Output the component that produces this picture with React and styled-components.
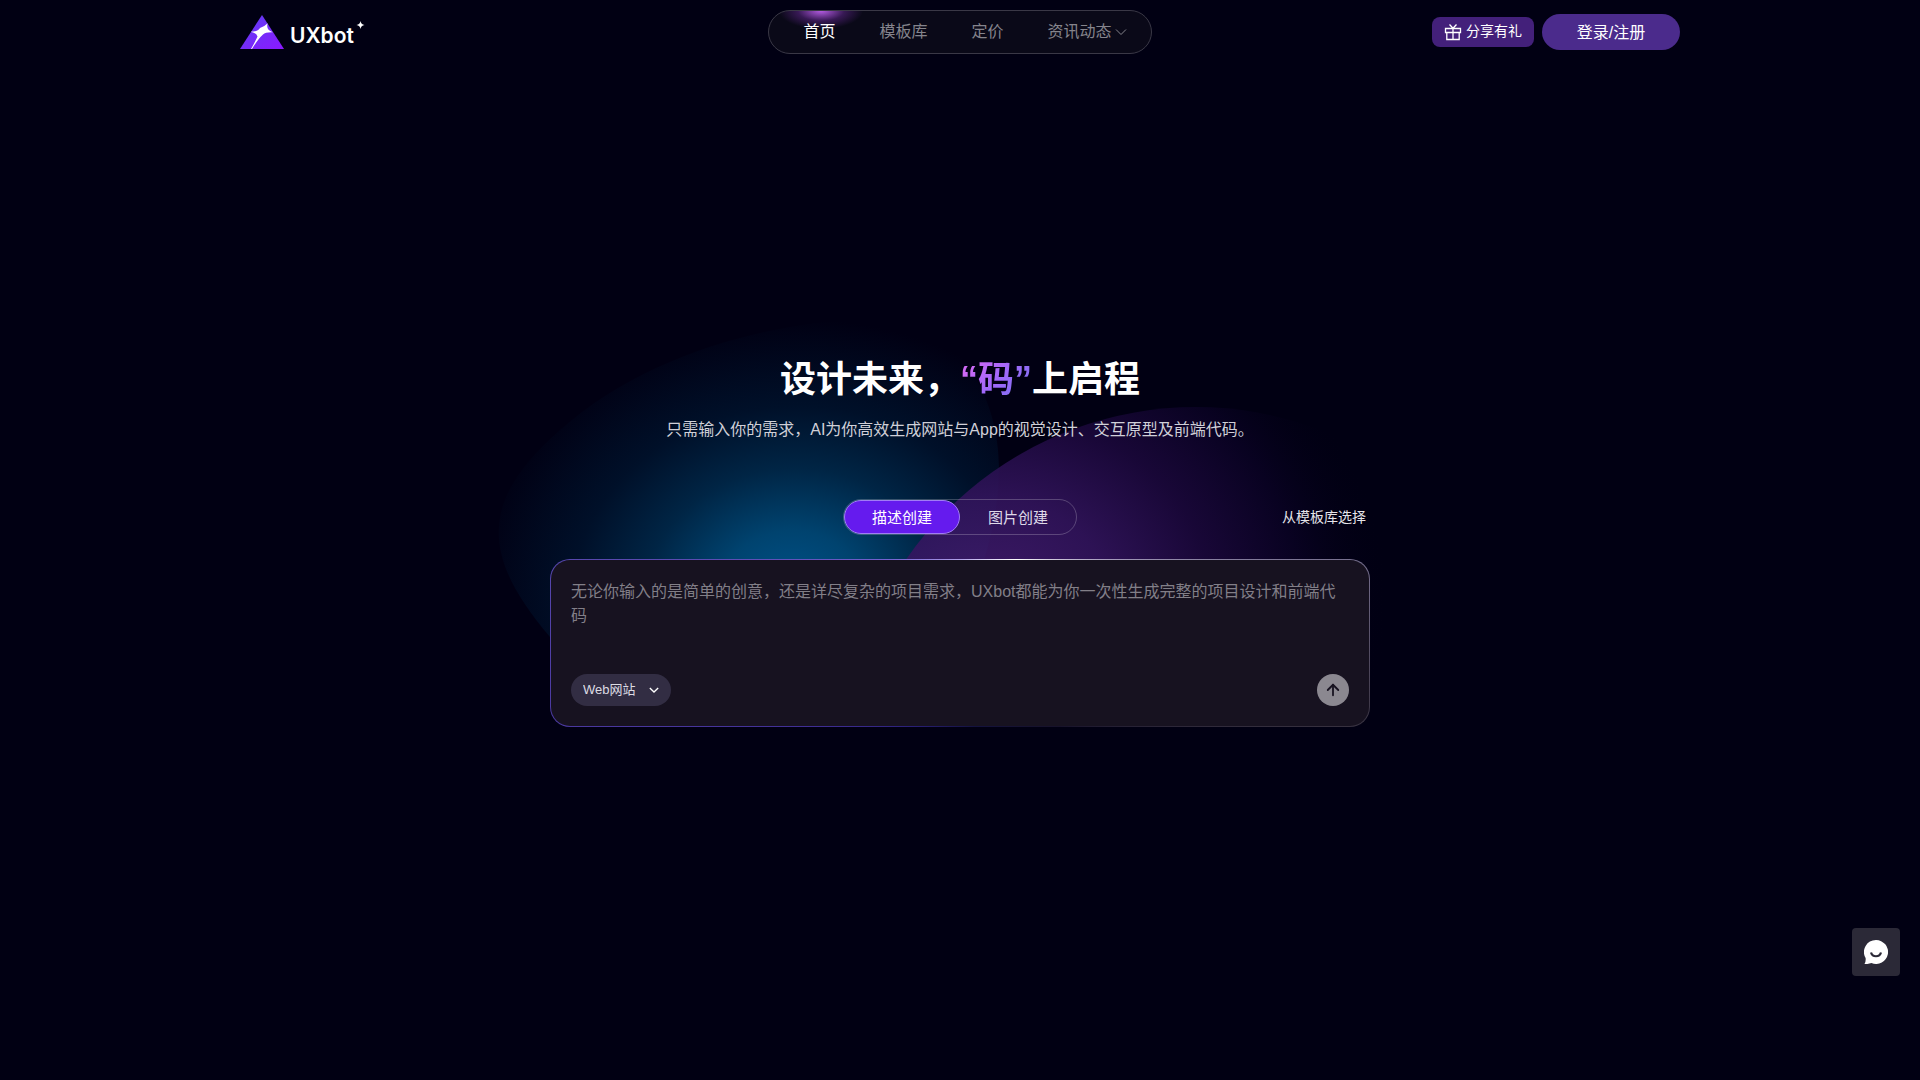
import React, { useState } from "react";
import styled, { createGlobalStyle } from "styled-components";
import { ArrowUp } from "lucide-react";

const GlobalStyle = createGlobalStyle`
  *, *::before, *::after {
    box-sizing: border-box;
  }
  body {
    margin: 0;
    background: #010013;
    color: #fff;
    font-family: "Liberation Sans", "Noto Sans CJK SC", sans-serif;
    font-size: 16px;
  }
  button, select, textarea {
    font-family: inherit;
  }
`;

const Page = styled.div`
  display: flex;
  flex-direction: column;
  min-height: 100vh;
  overflow: hidden;
`;

const Header = styled.header`
  display: grid;
  grid-template-columns: 1fr auto 1fr;
  align-items: center;
  width: 100%;
  max-width: 1440px;
  height: 64px;
  margin: 0 auto;
  position: relative;
  z-index: 1;
`;

const Logo = styled.a`
  display: flex;
  justify-self: start;
`;

const Nav = styled.nav`
  display: flex;
  align-items: center;
  gap: 44px;
  height: 44px;
  padding: 0 24px 0 34px;
  border: 1px solid #3a3846;
  border-radius: 22px;
  background: radial-gradient(ellipse 42px 18px at 52px 0, #b25be0, #64289080 55%, transparent), #0a0918;
`;

const NavLink = styled.a`
  display: flex;
  align-items: center;
  gap: 3px;
  line-height: 24px;
  color: ${(p) => (p.$active ? "#fff" : "#85848c")};
  text-decoration: none;
`;

const Actions = styled.div`
  display: flex;
  align-items: center;
  justify-content: flex-end;
  gap: 8px;
`;

const ShareButton = styled.button`
  display: flex;
  align-items: center;
  gap: 4px;
  height: 30px;
  padding: 0 12px;
  border: none;
  border-radius: 8px;
  background: #43207a;
  color: #fff;
  font-size: 14px;
  line-height: 28px;
  & > span {
    padding-bottom: 2px;
  }
`;

const LoginButton = styled.button`
  width: 138px;
  height: 36px;
  padding: 0 0 2px;
  border: none;
  border-radius: 18px;
  background: #4b2b8c;
  color: #fff;
  font-size: 16px;
`;

const Main = styled.main`
  flex: 1;
  display: flex;
  flex-direction: column;
  align-items: center;
  justify-content: center;
  padding-bottom: 64px;
`;

const Hero = styled.section`
  position: relative;
  width: 100%;
  max-width: 820px;
`;

const Glow = styled.svg`
  position: absolute;
  left: -70px;
  top: -53px;
  width: 1060px;
  height: 420px;
  pointer-events: none;
`;

const Content = styled.div`
  position: relative;
  display: flex;
  flex-direction: column;
`;

const Title = styled.h1`
  margin: 0;
  font-size: 36px;
  line-height: 54px;
  font-weight: 700;
  text-align: center;
`;

const Highlight = styled.span`
  background: linear-gradient(135deg, #cf69f5 15%, #a168fa 50%, #7c70f0 90%);
  background-clip: text;
  -webkit-background-clip: text;
  color: transparent;
`;

const Subtitle = styled.p`
  margin: 11px 0 57px;
  line-height: 24px;
  text-align: center;
  color: #d0d0d8;
`;

const ModeRow = styled.div`
  display: grid;
  grid-template-columns: 1fr auto 1fr;
  align-items: center;
  margin-bottom: 24px;
`;

const Tabs = styled.div`
  grid-column: 2;
  display: flex;
  height: 36px;
  border: 1px solid #ffffff38;
  border-radius: 18px;
`;

const Tab = styled.button`
  width: 116px;
  height: 34px;
  padding: 0 0 2px;
  border: 1px solid ${(p) => (p.$active ? "#a17cf5" : "transparent")};
  border-radius: 17px;
  background: ${(p) => (p.$active ? "#651bee" : "transparent")};
  color: ${(p) => (p.$active ? "#fff" : "#ded9e8")};
  font-size: 15px;
`;

const TemplateLink = styled.a`
  justify-self: end;
  padding: 0 4px 2px 0;
  color: #e6e5ea;
  font-size: 14px;
  text-decoration: none;
`;

const PromptBox = styled.form`
  display: flex;
  flex-direction: column;
  justify-content: space-between;
  min-height: 168px;
  padding: 20px;
  border: 1px solid transparent;
  border-radius: 20px;
  background:
    linear-gradient(#171220, #171220) padding-box,
    conic-gradient(
      #b0a0e8, #fff 34deg, #a79dbd 60deg, #77708f 78deg, #37313f 102deg, #17122a 130deg,
      #14123f 170deg, #2a2078 210deg, #3f2e94 240deg, #4a389f 258deg, #5747ad 282deg, #7563d0 320deg, #b0a0e8
    ) border-box;
`;

const PromptInput = styled.textarea`
  display: block;
  width: 100%;
  height: 72px;
  padding: 0;
  border: none;
  outline: none;
  resize: none;
  overflow: hidden;
  background: transparent;
  color: #fff;
  font-size: 16px;
  line-height: 24px;
  &::placeholder {
    color: #827f88;
    opacity: 1;
  }
`;

const PromptFooter = styled.div`
  display: flex;
  align-items: center;
  justify-content: space-between;
`;

const SelectWrap = styled.div`
  display: grid;
  align-items: center;
  width: 100px;
  height: 32px;
  border-radius: 16px;
  background: #322d43;
  & > * {
    grid-area: 1 / 1;
  }
  & > svg {
    justify-self: end;
    margin-right: 12px;
    pointer-events: none;
  }
`;

const PlatformSelect = styled.select`
  width: 100%;
  height: 32px;
  padding: 0 12px 2px;
  border: none;
  border-radius: 16px;
  appearance: none;
  background: transparent;
  color: #dddce3;
  font-size: 13px;
`;

const SendButton = styled.button`
  display: flex;
  align-items: center;
  justify-content: center;
  width: 32px;
  height: 32px;
  padding: 0;
  border: none;
  border-radius: 50%;
  background: #8b8890;
  color: #171220;
`;

const ChatButton = styled.button`
  position: fixed;
  right: 20px;
  bottom: 104px;
  display: flex;
  align-items: center;
  justify-content: center;
  width: 48px;
  height: 48px;
  padding: 0;
  border: none;
  border-radius: 4px;
  background: #2b2937;
`;

const LogoMark = () => (
  <svg width="130" height="40" viewBox="0 0 130 40" role="img">
    <defs>
      <linearGradient id="mark" x1="0" y1="0" x2="1" y2="1">
        <stop offset="0.3" stopColor="#6a35f5" />
        <stop offset="1" stopColor="#8c18ff" />
      </linearGradient>
    </defs>
    <path d="M22 3 44 37H0Z" fill="url(#mark)" />
    <path
      d="M27.700 11.300Q25.500 17.500 32.700 20.300Q25.500 20 23 22.500Q18 27 12 37H11Q16 28 17.500 24.500Q16.500 21 10.700 19.700Q18 19.500 20 16Q24 15 27.700 11.300Z"
      fill="#fff"
    />
    <text
      x="50"
      y="31"
      fill="#fff"
      fontFamily="Inter, sans-serif"
      fontSize="21"
      fontWeight="600"
    >
      UXbot
    </text>
    <path d="M120.500 9Q121 12.500 124.500 13Q121 13.500 120.500 17Q120 13.500 116.500 13Q120 12.500 120.500 9Z" fill="#fff" />
  </svg>
);

const GiftIcon = () => (
  <svg width="18" height="18" viewBox="0 0 18 18" fill="none" stroke="#fff" strokeWidth="1.3">
    <path d="M1.500 5.500h15v4h-15zM2.800 9.500v7h12.400v-7M9 5.500v11M5.500 1.500 9 5.300l3.500-3.800" />
  </svg>
);

const Chevron = ({ width, strokeWidth }) => (
  <svg width={width} height={width} viewBox="0 0 12 12" fill="none" stroke="currentColor" strokeWidth={strokeWidth}>
    <path d="M1 3.500 6 8.500 11 3.500" />
  </svg>
);

const ChatIcon = () => (
  <svg width="24" height="24" viewBox="0 0 24 24">
    <path d="M12 0a12 12 0 1 1-4.500 23.100Q4 24.300.5 24 2 21.500 1.600 18A12 12 0 0 1 12 0Z" fill="#fff" />
    <path d="M7 12.500a5.200 5.200 0 0 0 10 0" fill="none" stroke="#2b2937" strokeWidth="2.200" />
  </svg>
);

const HeroGlow = () => (
  <Glow viewBox="480 300 1060 420" aria-hidden="true">
    <defs>
      <radialGradient id="blue" gradientUnits="userSpaceOnUse" cx="0" cy="0" r="1" gradientTransform="translate(790 590) rotate(-6) scale(320 270)">
        <stop offset="0" stopColor="#005288" />
        <stop offset="0.22" stopColor="#00436f" />
        <stop offset="0.45" stopColor="#002545" />
        <stop offset="0.68" stopColor="#001029" />
        <stop offset="1" stopColor="#010013" />
      </radialGradient>
      <radialGradient id="violet" gradientUnits="userSpaceOnUse" cx="0" cy="0" r="1" gradientTransform="translate(990 600) scale(400 340)">
        <stop offset="0" stopColor="#431d70" />
        <stop offset="0.3" stopColor="#32145c" />
        <stop offset="0.55" stopColor="#1b083b" />
        <stop offset="0.78" stopColor="#090222" />
        <stop offset="1" stopColor="#010013" stopOpacity="0" />
      </radialGradient>
    </defs>
    <path
      d="M550 637C480 555 480 500 560 430C650 350 780 320 880 318C960 320 1000 400 999 470C998 530 980 570 960 640Z"
      fill="url(#blue)"
    />
    <path d="M849 700A352 352 0 0 1 1543 700Z" fill="url(#violet)" opacity="0.9" />
  </Glow>
);

export default function App() {
  const [mode, setMode] = useState("text");
  const [prompt, setPrompt] = useState("");

  return (
    <>
      <GlobalStyle />
      <Page>
        <Header>
          <Logo href="#" aria-label="UXbot">
            <LogoMark />
          </Logo>
          <Nav>
            <NavLink href="#" $active>
              首页
            </NavLink>
            <NavLink href="#templates">模板库</NavLink>
            <NavLink href="#pricing">定价</NavLink>
            <NavLink href="#news">
              资讯动态
              <Chevron width={12} strokeWidth={1} />
            </NavLink>
          </Nav>
          <Actions>
            <ShareButton type="button">
              <GiftIcon />
              <span>分享有礼</span>
            </ShareButton>
            <LoginButton type="button">登录/注册</LoginButton>
          </Actions>
        </Header>
        <Main>
          <Hero>
            <HeroGlow />
            <Content>
              <Title>
                设计未来，<Highlight>“码”</Highlight>上启程
              </Title>
              <Subtitle>
                只需输入你的需求，AI为你高效生成网站与App的视觉设计、交互原型及前端代码。
              </Subtitle>
              <ModeRow>
                <Tabs role="tablist">
                  <Tab
                    type="button"
                    role="tab"
                    aria-selected={mode === "text"}
                    $active={mode === "text"}
                    onClick={() => setMode("text")}
                  >
                    描述创建
                  </Tab>
                  <Tab
                    type="button"
                    role="tab"
                    aria-selected={mode === "image"}
                    $active={mode === "image"}
                    onClick={() => setMode("image")}
                  >
                    图片创建
                  </Tab>
                </Tabs>
                <TemplateLink href="#templates">从模板库选择</TemplateLink>
              </ModeRow>
              <PromptBox onSubmit={(e) => e.preventDefault()}>
                <PromptInput
                  aria-label="项目需求"
                  placeholder="无论你输入的是简单的创意，还是详尽复杂的项目需求，UXbot都能为你一次性生成完整的项目设计和前端代码"
                  value={prompt}
                  onChange={(e) => setPrompt(e.target.value)}
                />
                <PromptFooter>
                  <SelectWrap>
                    <PlatformSelect aria-label="平台">
                      <option>Web网站</option>
                      <option>App</option>
                    </PlatformSelect>
                    <Chevron width={10} strokeWidth={1.6} />
                  </SelectWrap>
                  <SendButton type="submit" aria-label="发送">
                    <ArrowUp size={18} strokeWidth={2.4} />
                  </SendButton>
                </PromptFooter>
              </PromptBox>
            </Content>
          </Hero>
        </Main>
        <ChatButton type="button" aria-label="在线客服">
          <ChatIcon />
        </ChatButton>
      </Page>
    </>
  );
}
